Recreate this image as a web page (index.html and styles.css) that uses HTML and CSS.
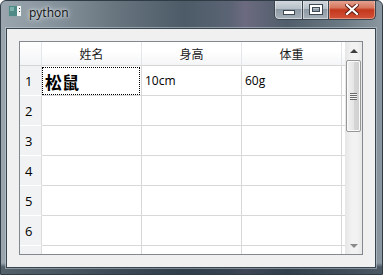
FILE: index.html
```html
<!DOCTYPE html>
<html>
<head>
    <meta charset="utf-8" />
    <title>python</title>
    <link rel="stylesheet" href="styles.css">
</head>
<body>
    <section class="window">
        <header class="titlebar">
            <svg class="appicon" width="14" height="12" viewBox="0 0 14 12">
                <rect x="0" y="0" width="14" height="12" fill="#f4f6f6" />
                <rect x="0.5" y="0.5" width="13" height="11" fill="none" stroke="#8fa3a8" />
                <rect x="1" y="1" width="8" height="10" fill="#4f8a86" />
                <rect x="2" y="2" width="4" height="4" fill="#7cb2ab" />
                <rect x="11" y="3" width="1" height="1" fill="#3a4a50" />
                <rect x="11" y="6" width="1" height="1" fill="#3a4a50" />
            </svg>
            <span class="title">python</span>
            <div class="captions">
                <div class="capbtn minbtn"><span class="minglyph"></span></div>
                <div class="capbtn maxbtn"><span class="maxglyph"></span></div>
                <div class="capbtn closebtn">
                    <svg width="14" height="11" viewBox="0 0 14 11">
                        <path d="M2 1 L12 10 M12 1 L2 10" stroke="#5a1a10" stroke-width="4" stroke-linecap="square" />
                        <path d="M2 1 L12 10 M12 1 L2 10" stroke="#ffffff" stroke-width="2.2" stroke-linecap="square" />
                    </svg>
                </div>
            </div>
        </header>
        <section class="client">
            <div class="tableview">
                <div class="grid">
                    <div class="corner"></div>
                    <div class="hhead">姓名</div>
                    <div class="hhead">身高</div>
                    <div class="hhead">体重</div>
                    <div class="hhead blank"></div>

                    <div class="vhead">1</div>
                    <div class="cell big"><span class="focus">松鼠</span></div>
                    <div class="cell">10cm</div>
                    <div class="cell">60g</div>
                    <div class="pad"></div>

                    <div class="vhead">2</div>
                    <div class="cell"></div><div class="cell"></div><div class="cell"></div><div class="pad"></div>
                    <div class="vhead">3</div>
                    <div class="cell"></div><div class="cell"></div><div class="cell"></div><div class="pad"></div>
                    <div class="vhead">4</div>
                    <div class="cell"></div><div class="cell"></div><div class="cell"></div><div class="pad"></div>
                    <div class="vhead">5</div>
                    <div class="cell"></div><div class="cell"></div><div class="cell"></div><div class="pad"></div>
                    <div class="vhead">6</div>
                    <div class="cell"></div><div class="cell"></div><div class="cell"></div><div class="pad"></div>
                    <!-- row 7 is only partly scrolled into view -->
                    <div class="vhead"></div>
                    <div class="cell"></div><div class="cell"></div><div class="cell"></div><div class="pad"></div>
                </div>
                <div class="vscroll">
                    <div class="arrow up"></div>
                    <div class="track">
                        <div class="thumb"><span class="grip"></span></div>
                    </div>
                    <div class="arrow down"></div>
                </div>
            </div>
        </section>
    </section>
</body>
</html>
```

FILE: styles.css
```css
body {
    margin: 0;
    background: #ffffff;
}

.window {
    width: 383px;
    height: 275px;
    box-sizing: border-box;
    border-radius: 6px 6px 0 0;
    background:
        linear-gradient(rgba(0, 0, 0, 0) 262px, rgba(25, 38, 50, 0.55) 266px),
        linear-gradient(90deg, #9aa5ad 0%, #8a969f 12%, #68757f 30%, #4c5b67 48%, #5b6474 60%, #6c6a80 64%, #4f5e6a 75%, #6c7a85 90%, #8b97a0 100%);
    display: flex;
    flex-direction: column;
    overflow: hidden;
    border: 1px solid #2f3c46;
}

.titlebar {
    height: 27px;
    display: flex;
    align-items: flex-start;
    font-family: "Open Sans", "Noto Sans", sans-serif;
}

.appicon {
    margin: 4px 0 0 7px;
}

.title {
    margin: 3px 0 0 7px;
    font-size: 12px;
    color: #111;
    text-shadow: 0 0 6px #e8eef2, 0 0 3px #e8eef2;
}

.captions {
    margin-left: auto;
    margin-right: 6px;
    display: flex;
    margin-top: -1px;
}

.capbtn {
    height: 20px;
    box-sizing: border-box;
    border: 1px solid #3a4550;
    border-top: none;
    display: flex;
    justify-content: center;
    align-items: center;
}

.minbtn {
    width: 29px;
    border-radius: 0 0 0 5px;
    background: linear-gradient(#d6dbe0, #b7c0c8 45%, #8d99a4 50%, #a6b0b9 100%);
    box-shadow: inset 0 0 0 1px rgba(255, 255, 255, 0.45);
}

.maxbtn {
    width: 26px;
    border-left: none;
    background: linear-gradient(#d6dbe0, #b7c0c8 45%, #8d99a4 50%, #a6b0b9 100%);
    box-shadow: inset 0 0 0 1px rgba(255, 255, 255, 0.45);
}

.closebtn {
    width: 47px;
    border-left: none;
    border-radius: 0 0 5px 0;
    background: linear-gradient(#e6a796, #d7775f 40%, #c4381c 52%, #d2533a 100%);
    box-shadow: inset 0 0 0 1px rgba(255, 220, 200, 0.45);
}

.minglyph {
    width: 10px;
    height: 3px;
    margin-top: 6px;
    background: #fff;
    border: 1px solid #3e4852;
}

.maxglyph {
    width: 8px;
    height: 5px;
    border: 2px solid #fff;
    outline: 1px solid #3e4852;
    background: transparent;
    box-shadow: inset 0 0 0 1px #3e4852;
}

.client {
    margin: 0 6px 6px 5px;
    flex: 1;
    background: #f0f0f0;
    border: 1px solid #38444e;
    box-shadow: 0 0 0 1px rgba(200, 210, 218, 0.5);
    padding: 12px;
    display: flex;
}

.tableview {
    width: 344px;
    height: 214px;
    box-sizing: border-box;
    border: 1px solid #828790;
    background: #fff;
    display: flex;
}

.grid {
    width: 325px;
    height: 212px;
    overflow: hidden;
    display: grid;
    grid-template-columns: 22px 100px 100px 100px 3px;
    grid-template-rows: 24px repeat(7, 30px);
    font-family: "Open Sans", "Noto Sans", "Noto Sans CJK SC", sans-serif;
    font-size: 12px;
    color: #000;
}

.corner {
    background: linear-gradient(#ffffff, #f3f4f6);
    border-right: 1px solid #e3e6ea;
    border-bottom: 1px solid #d5d5d5;
}

.hhead {
    background: linear-gradient(#ffffff 40%, #f4f5f7);
    border-right: 1px solid #e3e6ea;
    border-bottom: 1px solid #d5d5d5;
    display: flex;
    justify-content: center;
    align-items: center;
    font-family: "Noto Sans CJK SC", sans-serif;
    color: #1a1a1a;
}

.hhead.blank {
    border-right: none;
}

.vhead {
    background: #f1f2f4;
    border-right: 1px solid #dcdcdc;
    border-bottom: 1px solid #ffffff;
    padding-left: 5px;
    display: flex;
    align-items: center;
    font-size: 13px;
}

.cell {
    border-right: 1px solid #d8d8d8;
    border-bottom: 1px solid #d8d8d8;
    display: flex;
    align-items: center;
    padding-left: 3px;
}

.pad {
    border-bottom: 1px solid #d8d8d8;
}

.cell.big {
    padding: 1px 1px 0 0;
    align-items: stretch;
}

.focus {
    flex: 1;
    border: 1px dotted #000;
    display: flex;
    align-items: center;
    padding-left: 2px;
    font-family: "Noto Sans CJK SC", sans-serif;
    font-weight: bold;
    font-size: 17px;
}

.vscroll {
    width: 17px;
    height: 212px;
    background: linear-gradient(90deg, #e6e6e6, #f2f2f2 40%, #f2f2f2 70%, #e8e8e8);
    display: flex;
    flex-direction: column;
}

.arrow {
    height: 17px;
    display: flex;
    justify-content: center;
    align-items: center;
}

.arrow::after {
    content: "";
    border-left: 4px solid transparent;
    border-right: 4px solid transparent;
}

.arrow.up::after {
    border-bottom: 4px solid #3e3e3e;
}

.arrow.down::after {
    border-top: 4px solid #8a8a8a;
}

.track {
    flex: 1;
    padding-top: 1px;
}

.thumb {
    height: 72px;
    margin: 0 1px;
    box-sizing: border-box;
    border: 1px solid #979797;
    border-radius: 2px;
    background: linear-gradient(90deg, #f2f2f2, #e6e6e6 50%, #d6d6d6 52%, #d0d0d0);
    box-shadow: inset 0 0 0 1px #fbfbfb;
    display: flex;
    justify-content: center;
    align-items: center;
}

.grip {
    width: 7px;
    height: 7px;
    background: repeating-linear-gradient(#6a6a6a 0 1px, #f4f4f4 1px 2px);
}
```
